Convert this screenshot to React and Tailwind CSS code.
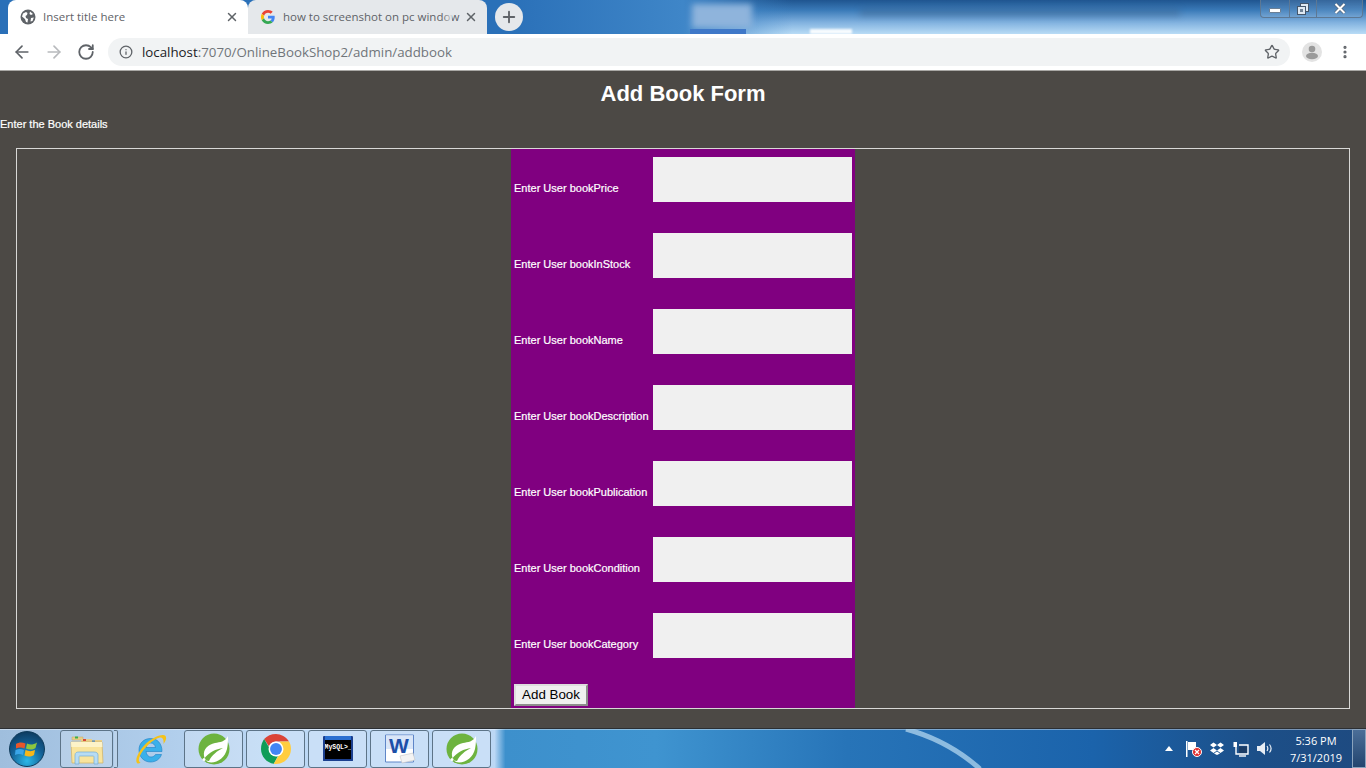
import React from "react";
import { ArrowLeft, ArrowRight, RotateCw, Info, Star, X, Plus, MoreVertical } from "lucide-react";

const fields = ["bookPrice", "bookInStock", "bookName", "bookDescription", "bookPublication", "bookCondition", "bookCategory"];

function Globe() {
  return (
    <svg width="16" height="16" viewBox="0 0 16 16" className="shrink-0">
      <circle cx="8" cy="8" r="7.500" fill="#5f6368" />
      <path d="M3 4.500 L6 3 L7.500 4 L7 6 L5.500 7 L6 9 L8 10 L7.500 13.500 L6 13 L5 10 L2 7.500Z M10 2.500 L13 5 L11 6 L9.500 5Z M11 9 L13.800 8.500 L12.500 12 L10.500 12.500Z" fill="#fff" />
    </svg>
  );
}

function GoogleG() {
  return (
    <svg width="14" height="14" viewBox="0 0 48 48" className="mx-px shrink-0">
      <path fill="#EA4335" d="M24 9.500c3.500 0 6.700 1.200 9.200 3.600l6.900-6.900C35.900 2.400 30.500 0 24 0 14.600 0 6.500 5.400 2.600 13.200l8 6.200C12.500 13.600 17.800 9.500 24 9.500z" />
      <path fill="#4285F4" d="M47 24.500c0-1.600-.1-3.100-.4-4.500H24v9h12.900c-.6 3-2.300 5.500-4.800 7.200l7.700 6c4.500-4.200 7.200-10.300 7.200-17.700z" />
      <path fill="#FBBC05" d="M10.600 28.600c-.5-1.400-.8-3-.8-4.600s.3-3.200.8-4.600l-8-6.200C.9 16.500 0 20.100 0 24s.9 7.500 2.600 10.800l8-6.200z" />
      <path fill="#34A853" d="M24 48c6.500 0 11.900-2.100 15.900-5.800l-7.700-6c-2.200 1.500-4.900 2.300-8.200 2.300-6.200 0-11.500-4.100-13.400-9.900l-8 6.200C6.500 42.600 14.600 48 24 48z" />
    </svg>
  );
}

function WindowControls() {
  return (
    <div className="absolute right-[3px] top-0 flex h-[18px] w-[103px] rounded-b-[4px] border border-t-0 border-[#5d7894] bg-white/10">
      <div className="flex w-[29px] items-center justify-center border-r border-[#5d7894]">
        <div className="mt-[3px] h-[5px] w-[12px] rounded-[1px] border border-[#6b7f95] bg-white" />
      </div>
      <div className="flex w-[27px] items-center justify-center border-r border-[#5d7894]">
        <svg width="12" height="12" viewBox="0 0 12 12"><rect x="3.500" y="0.500" width="8" height="8" fill="#dfe8f1" stroke="#44566b" /><rect x="0.500" y="3.500" width="8" height="8" fill="#dfe8f1" stroke="#44566b" /><rect x="3" y="6" width="3" height="3" fill="#6f8296" /></svg>
      </div>
      <div className="flex flex-1 items-center justify-center">
        <svg width="14" height="11" viewBox="0 0 14 11"><path d="M2.500 1 L11.500 10 M11.500 1 L2.500 10" stroke="#50647a" strokeWidth="3.400" /><path d="M2.500 1 L11.500 10 M11.500 1 L2.500 10" stroke="#fff" strokeWidth="2" /></svg>
      </div>
    </div>
  );
}

function Chrome() {
  return (
    <div className="shrink-0 font-['Open_Sans',sans-serif]">
      <div className="relative flex h-[34px] items-end overflow-hidden bg-[linear-gradient(180deg,#1f5590_0%,#3a7ab8_30%,#7fb0de_65%,#b9dcf6_100%)]">
        <div className="pointer-events-none absolute inset-0 bg-[linear-gradient(90deg,#2a70b8_0%,#2a70b8_37%,#3f86c8_50%,transparent_58%)]" />
        <div className="pointer-events-none absolute left-[692px] top-[4px] h-[24px] w-[60px] bg-[#8fb4dc] blur-[3px]" />
        <div className="pointer-events-none absolute left-[690px] top-[29px] h-[5px] w-[56px] bg-[#3f78c8]" />
        <div className="pointer-events-none absolute left-[810px] top-[29px] h-[5px] w-[42px] bg-white/90 blur-[1px]" />
        <div className="pointer-events-none absolute left-[860px] top-[9px] h-[7px] w-[320px] bg-[#3f5f85]/40 blur-[3px]" />
        <div className="relative ml-[8px] flex h-[34px] w-[240px] items-center rounded-t-[8px] bg-white pl-[12px] pr-[9px]">
          <Globe />
          <span className="ml-[7px] flex-1 truncate text-[11.500px] text-[#5f6368]">Insert title here</span>
          <X size={14} strokeWidth={2.500} className="text-[#5f6368]" />
        </div>
        <div className="relative flex h-[34px] w-[239px] items-center rounded-t-[8px] bg-[#e5e8eb] pl-[12px] pr-[9px]">
          <GoogleG />
          <div className="relative ml-[7px] min-w-0 flex-1">
            <span className="block whitespace-nowrap text-[11.500px] text-[#5f6368]">how to screenshot on pc window</span>
            <div className="absolute inset-y-0 right-[6px] w-[10px] bg-[linear-gradient(90deg,transparent,#e5e8ebcc)]" />
          </div>
          <X size={14} strokeWidth={2.500} className="ml-[6px] shrink-0 text-[#5f6368]" />
        </div>
        <div className="relative mb-[3px] ml-[8px] flex h-[28px] w-[28px] items-center justify-center rounded-full bg-[#e5e8eb]">
          <Plus size={18} strokeWidth={2.500} className="text-[#5f6368]" />
        </div>
        <WindowControls />
      </div>
      <div className="flex h-[36px] items-center bg-white pl-[12px] pr-[13px]">
        <ArrowLeft size={20} className="text-[#5f6368]" />
        <ArrowRight size={20} className="ml-[12px] text-[#b8babd]" />
        <RotateCw size={18} strokeWidth={2.400} className="ml-[13px] text-[#5f6368]" />
        <div className="ml-[13px] flex h-[28px] flex-1 items-center rounded-full bg-[#f1f3f4] pl-[11px] pr-[10px]">
          <Info size={14} strokeWidth={2.200} className="text-[#5f6368]" />
          <span className="ml-[9px] flex-1 pt-px text-[13.300px] text-[#70757a]"><span className="text-[#202124]">localhost</span>:7070/OnlineBookShop2/admin/addbook</span>
          <Star size={16} strokeWidth={2} className="text-[#5f6368]" />
        </div>
        <div className="ml-[12px] flex h-[20px] w-[20px] items-center justify-center overflow-hidden rounded-full bg-[#e3e3e3]">
          <svg width="20" height="20" viewBox="0 0 20 20"><circle cx="10" cy="7" r="3.300" fill="#9a9a9a" /><ellipse cx="10" cy="14" rx="6" ry="3.200" fill="#9a9a9a" /></svg>
        </div>
        <MoreVertical size={16} strokeWidth={2.800} className="ml-[15px] text-[#5f6368]" />
      </div>
      <div className="h-px bg-[#a9a8a5]" />
    </div>
  );
}

function Leaf() {
  return (
    <svg width="32" height="32" viewBox="0 0 32 32">
      <circle cx="16" cy="16" r="15.500" fill="#6db33f" />
      <path d="M30 3 C27 9 22 9 17 10 C10 11.500 5 16 6 23 C6.500 26 8 28 10 29 C18 31 27 25 29 16 C30 11 30 7 30 3Z" fill="#fff" />
      <path d="M6 26 C11 19 18 16 25 15 C19 18 14 22 11 28 C9 28 7 27 6 26Z" fill="#6db33f" />
      <circle cx="6" cy="26.500" r="1.500" fill="#fff" />
    </svg>
  );
}

function ChromeLogo() {
  return (
    <svg width="30" height="30" viewBox="0 0 48 48">
      <path fill="#db4437" d="M24 0 C32 0 40 4.500 44.800 12 L24 12 C18 12 14 15.500 12.600 19.500 L5 8 C9.500 3 16.500 0 24 0Z" />
      <path fill="#0f9d58" d="M5 8 L15.500 26 C17.500 33 22 36 27 35.600 L20.500 47.700 C9 46 0 36 0 24 C0 17.500 2 12.500 5 8Z" />
      <path fill="#ffcd40" d="M44.800 12 C47 15.500 48 19.500 48 24 C48 37 37.500 48 24 48 C22.500 48 21.500 47.900 20.500 47.700 L31 29 C33.500 25 34 19 30 12Z" />
      <circle cx="24" cy="24" r="12" fill="#fff" />
      <circle cx="24" cy="24" r="9.500" fill="#4285f4" />
    </svg>
  );
}

function Folder() {
  return (
    <svg width="34" height="32" viewBox="0 0 34 32">
      <path d="M2 4 H13 V7 H2Z" fill="#e8cf8a" stroke="#c9a860" strokeWidth="0.500" />
      <rect x="5" y="3.500" width="3" height="2" fill="#3cb04a" />
      <path d="M11 6 H22 V9 H11Z" fill="#e8cf8a" />
      <rect x="13" y="6" width="3" height="2" fill="#d84a38" />
      <path d="M19 7 H32 V12 H19Z" fill="#e8cf8a" />
      <rect x="22" y="7.500" width="3" height="2" fill="#3a86d8" />
      <path d="M1 9 H32 L33 30 H2Z" fill="#f9e49c" stroke="#d2b66d" strokeWidth="0.800" />
      <path d="M1 9 H32 L32.300 14 H1.300Z" fill="#fdf3c8" />
      <path d="M5 31 V22 C5 19.500 7 19 9 19 H24 C27 19 28 20.500 28 22 V31 H24 V24 C24 23 23.500 23 23 23 H10 C9 23 9 23.500 9 24 V31Z" fill="#b7dcf4" stroke="#72aed4" strokeWidth="0.700" />
    </svg>
  );
}

function IE() {
  return (
    <svg width="32" height="32" viewBox="0 0 32 32">
      <path d="M4 17 C4 10 9 5.500 15.500 5.500 C22 5.500 27 10 27 18.500 H11 C11.500 22 13.500 24 16 24 C18 24 19.500 23 20.500 21.500 H26.500 C25 26 21 29 15.500 29 C9 29 4 24 4 17Z M11 14.500 H20.500 C20 11.500 18 10 15.800 10 C13.500 10 11.500 11.500 11 14.500Z" fill="#3ab0ea" fillRule="evenodd" stroke="#1c7fc4" strokeWidth="0.600" />
      <path d="M2 30 C-1 26 6 14 14 8 C20 3.500 28 0 30.500 3 C32 5 30.500 8.500 28.500 11 C29 6.500 27.500 4 25 4.500 C19 5.500 8 15 4.500 24 C3.500 26.500 3.500 28.500 5.500 29.800 C4 30.800 2.800 30.800 2 30Z" fill="#f5c21b" />
    </svg>
  );
}

function MySql() {
  return (
    <div className="flex h-[25px] w-[30px] flex-col overflow-hidden rounded-[1px] border-x-2 border-b-2 border-[#1b3f8f] bg-black">
      <div className="h-[4px] shrink-0 bg-[#2b6fd0]" />
      <span className="mt-[2px] whitespace-nowrap text-center font-['Liberation_Mono',monospace] text-[6.500px] font-bold leading-[12px] text-white">MySQL&gt;_</span>
    </div>
  );
}

function Word() {
  return (
    <svg width="32" height="32" viewBox="0 0 32 32">
      <path d="M1.500 2 H29.500 V29 H1.500Z" fill="#fff" stroke="#5f86c8" />
      <path d="M2 2.500 H29 V16 H2Z" fill="#d9e6f8" />
      <text x="15" y="20" textAnchor="middle" fontFamily="Liberation Sans" fontWeight="700" fontSize="21" fill="#1d4fa8">W</text>
      <path d="M16 23 L29 20 L31 27 L18 30Z" fill="#f3f3f3" stroke="#c4c4c4" strokeWidth="0.600" />
    </svg>
  );
}

function Orb() {
  return (
    <div className="flex h-[36px] w-[36px] items-center justify-center rounded-full border border-[#0d3a5a] bg-[radial-gradient(circle_at_50%_85%,#2ab8e8_0%,#135f94_50%,#0b2f4e_100%)]">
      <svg width="24" height="22" viewBox="0 0 24 22">
        <path d="M1 6 C4 4 7 4 10.500 5.500 L9.500 10.500 C6.500 9 4 9 1 10.500Z" fill="#e8562a" />
        <path d="M12 5.500 C15 7 18 7 22 4.500 L20.500 10 C17.500 12 14.500 12 11 10.500Z" fill="#8cc63f" />
        <path d="M0.500 12 C4 10.500 6 10.500 9 12 L8 17 C5 15.500 3 15.500 0 17Z" fill="#3aa5e8" />
        <path d="M10.500 12 C14 13.500 16.500 13.500 20 12 L19 17 C15.500 19 13 19 9.500 17.500Z" fill="#f7b718" />
      </svg>
    </div>
  );
}

function TaskButton({ w, children, plain }) {
  return (
    <div className={`flex h-[38px] shrink-0 items-center justify-center rounded-[3px] border ${plain ? "border-transparent" : "border-[#5d7488] bg-white/20"}`} style={{ width: w }}>
      {children}
    </div>
  );
}

function Taskbar() {
  return (
    <div className="relative flex h-[40px] shrink-0 items-center overflow-hidden border-t border-[#2c2f33] bg-[linear-gradient(90deg,#9fbedd_0%,#bcd8f5_20%,#bcd8f5_36.200%,#3d90cc_37%,#3f94d0_48%,#2774b8_62%,#1b63ab_80%,#1c4f88_92%,#1e4a80_100%)] font-['Open_Sans',sans-serif]">
      <div className="pointer-events-none absolute inset-x-0 top-0 h-px bg-white/40" />
      <svg width="120" height="40" viewBox="0 0 120 40" className="pointer-events-none absolute left-[880px] top-0">
        <path d="M26 0 C55 8 80 22 100 40" fill="none" stroke="#a9cfeb" strokeWidth="5" opacity="0.800" />
      </svg>
      <div className="relative ml-[9px] w-[51px] shrink-0"><Orb /></div>
      <div className="relative flex items-center">
        <TaskButton w={53}><Folder /></TaskButton>
        <div className="ml-px h-[38px] w-[4px] rounded-r-[2px] border border-l-0 border-[#5d7488] bg-white/20" />
        <TaskButton w={66} plain><IE /></TaskButton>
        <div className="flex gap-[3px]">
          <TaskButton w={59}><Leaf /></TaskButton>
          <TaskButton w={59}><ChromeLogo /></TaskButton>
          <TaskButton w={59}><MySql /></TaskButton>
          <TaskButton w={59}><Word /></TaskButton>
          <TaskButton w={59}><Leaf /></TaskButton>
        </div>
      </div>
      <div className="flex-1" />
      <svg width="8" height="5" viewBox="0 0 8 5" className="relative mr-[13px]"><path d="M0 5 L4 0 L8 5Z" fill="#fff" /></svg>
      <svg width="16" height="16" viewBox="0 0 16 16" className="relative mr-[8px]"><rect x="0" y="0" width="1.500" height="16" fill="#fff" /><path d="M2 1 H10 V9 H2Z" fill="#fff" /><circle cx="11" cy="11" r="4.500" fill="#e02b2b" stroke="#fff" /><path d="M9 9 L13 13 M13 9 L9 13" stroke="#fff" strokeWidth="1.300" /></svg>
      <svg width="14" height="13" viewBox="0 0 14 13" className="relative mr-[9px]"><path d="M3.500 0.500 L7 3 L3.500 5.500 L0 3Z M10.500 0.500 L14 3 L10.500 5.500 L7 3Z M3.500 6 L7 8.500 L3.500 11 L0 8.500Z M10.500 6 L14 8.500 L10.500 11 L7 8.500Z M7 9.500 L10 11.500 L7 13 L4 11.500Z" fill="#fff" /></svg>
      <svg width="16" height="16" viewBox="0 0 16 16" className="relative mr-[8px]"><path d="M0.500 1 H4 V6 H0.500Z" fill="#fff" /><path d="M3 6 V13 H15 V4 H6" fill="none" stroke="#fff" strokeWidth="1.400" /><path d="M6 5.500 H14 V12 H6Z" fill="#1c3d66" /><path d="M6 15 H13" stroke="#fff" strokeWidth="1.400" /></svg>
      <svg width="16" height="15" viewBox="0 0 16 15" className="relative mr-[15px]"><path d="M0 5 H3 L8 1 V14 L3 10 H0Z" fill="#e7edf4" /><path d="M10 5 C11 6.500 11 8.500 10 10 M12.500 3.500 C14.500 6 14.500 9 12.500 11.500" fill="none" stroke="#e7edf4" strokeWidth="1.200" /></svg>
      <div className="relative mr-[8px] flex w-[56px] flex-col items-center text-[11px] leading-[17px] text-white">
        <span className="whitespace-nowrap">5:36 PM</span>
        <span className="whitespace-nowrap">7/31/2019</span>
      </div>
      <div className="relative h-[39px] w-[14px] border border-[#8aa3bd] bg-[linear-gradient(180deg,#4b6e98,#23456f)]" />
    </div>
  );
}

export default function App() {
  return (
    <div className="flex h-[768px] flex-col overflow-hidden bg-[#4c4945] font-['Liberation_Sans',Arial,sans-serif]">
      <Chrome />
      <main className="flex min-h-0 flex-1 flex-col text-white">
        <h1 className="mt-[9px] text-center text-[22px] font-bold leading-[28px]">Add Book Form</h1>
        <p className="mt-[9px] text-[11px] leading-[14px] [-webkit-text-stroke:0.2px_white]">Enter the Book details</p>
        <div className="mx-[16px] mt-[17px] flex h-[561px] justify-center border border-[#d8d8d6]">
          <div className="flex w-[344px] flex-col bg-[#800080] pl-[3px] pr-[3px] pt-[8px]">
            {fields.map((f) => (
              <div key={f} className="mb-[31px] flex h-[45px] items-end justify-between">
                <label className="mb-[7px] whitespace-nowrap text-[11px] leading-[14px] [-webkit-text-stroke:0.2px_white]">Enter User {f}</label>
                <div className="h-[45px] w-[199px] bg-[#f0f0f0]" />
              </div>
            ))}
            <button className="-mt-[5px] h-[22px] w-[74px] border-2 border-t-[#dedede] border-l-[#dedede] border-b-[#8d8d8d] border-r-[#8d8d8d] bg-[#efefef] text-[13.333px] leading-none text-black">Add Book</button>
          </div>
        </div>
      </main>
      <Taskbar />
    </div>
  );
}
